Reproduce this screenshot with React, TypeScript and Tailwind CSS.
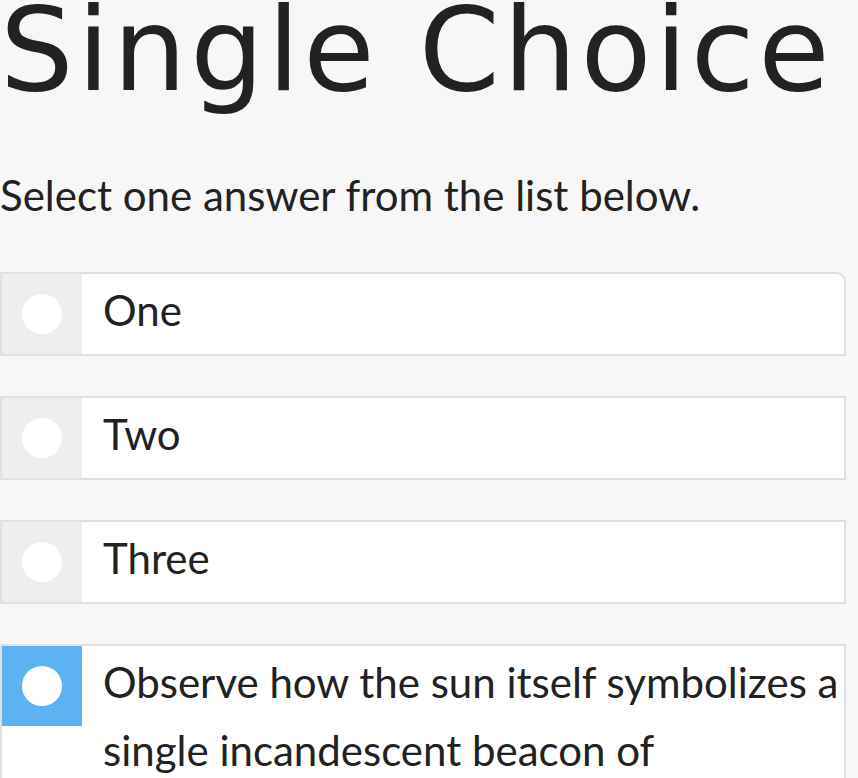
import { useState } from 'react';

const options = [
  'One',
  'Two',
  'Three',
  'Observe how the sun itself symbolizes a single incandescent beacon of illumination that shines upon everything',
];

export default function App() {
  const [selected, setSelected] = useState(3);

  return (
    <div className="min-h-screen bg-[#f7f7f7] text-[#222] overflow-hidden">
      <h1 className="font-['DejaVu_Sans',sans-serif] text-[116px] leading-[100px] tracking-[3.6px] whitespace-nowrap">
        Single Choice
      </h1>
      <p className="font-['Lato',sans-serif] text-[42px] leading-[60px] mt-[65px] whitespace-nowrap">
        Select one answer from the list below.
      </p>

      <div className="mt-[47px] flex flex-col gap-[40px] w-[846px]">
        {options.map((label, index) => (
          <button
            key={index}
            onClick={() => setSelected(index)}
            className={
              'flex items-stretch text-left bg-white border-2 border-[#e0e0e0] ' +
              (index === 0 ? 'rounded-tr-[10px]' : '')
            }
          >
            <div
              className={
                'w-[80px] h-[80px] shrink-0 flex items-center justify-center ' +
                (index === selected ? 'bg-[#5db3f1]' : 'bg-[#eeeeee]')
              }
            >
              <div className="w-[40px] h-[40px] rounded-full bg-white" />
            </div>
            <div className="pl-[21px] pr-0 pt-[2px] pb-[10px] font-['Lato',sans-serif] text-[42px] leading-[68px]">
              {label}
            </div>
          </button>
        ))}
      </div>
    </div>
  );
}
